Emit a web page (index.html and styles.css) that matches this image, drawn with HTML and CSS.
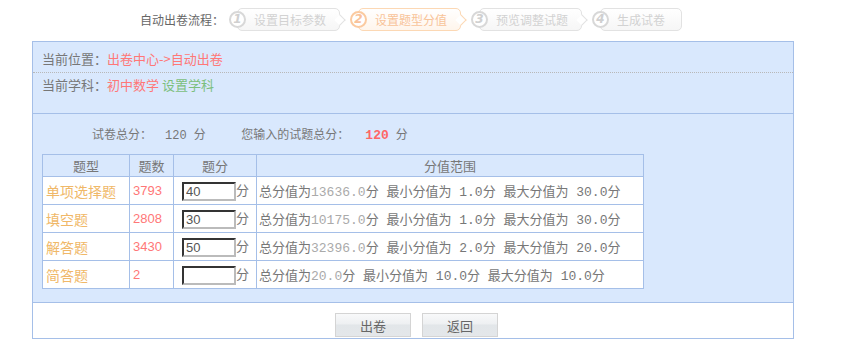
FILE: index.html
```html
<!DOCTYPE html>
<html>
<head>
<meta charset="utf-8">
<link rel="stylesheet" href="styles.css">
</head>
<body>
<div class="flow">
  <span class="flow-label">自动出卷流程：</span>
  <div class="step"><span class="num">1</span><span class="txt">设置目标参数</span><span class="arrow"></span></div>
  <div class="step active"><span class="num">2</span><span class="txt">设置题型分值</span><span class="arrow"></span></div>
  <div class="step"><span class="num">3</span><span class="txt">预览调整试题</span><span class="arrow"></span></div>
  <div class="step last"><span class="num">4</span><span class="txt">生成试卷</span></div>
</div>
<div class="box">
  <div class="info">
    <div class="line first">当前位置：<span class="red">出卷中心-&gt;自动出卷</span></div>
    <div class="line second">当前学科：<span class="red">初中数学</span> <span class="green">设置学科</span></div>
  </div>
  <div class="main">
    <div class="totals">
      <span>试卷总分：</span><span class="mono gap1">120</span><span class="sp">分</span>
      <span class="you">您输入的试题总分：</span><span class="big">120</span><span class="sp">分</span>
    </div>
    <table class="grid">
      <tr class="head"><th class="c1">题型</th><th class="c2">题数</th><th class="c3">题分</th><th class="c4">分值范围</th></tr>
      <tr><td class="type">单项选择题</td><td class="cnt">3793</td><td class="score"><input class="inp" value="40">分</td><td class="rng">总分值为<span class="lt">13636.0</span>分 最小分值为 1.0分 最大分值为 30.0分</td></tr>
      <tr><td class="type">填空题</td><td class="cnt">2808</td><td class="score"><input class="inp" value="30">分</td><td class="rng">总分值为<span class="lt">10175.0</span>分 最小分值为 1.0分 最大分值为 30.0分</td></tr>
      <tr><td class="type">解答题</td><td class="cnt">3430</td><td class="score"><input class="inp" value="50">分</td><td class="rng">总分值为<span class="lt">32396.0</span>分 最小分值为 2.0分 最大分值为 20.0分</td></tr>
      <tr><td class="type">简答题</td><td class="cnt">2</td><td class="score"><input class="inp" value="">分</td><td class="rng">总分值为<span class="lt">20.0</span>分 最小分值为 10.0分 最大分值为 10.0分</td></tr>
    </table>
  </div>
  <div class="actions">
    <button class="btn">出卷</button>
    <button class="btn">返回</button>
  </div>
</div>
</body>
</html>
```
FILE: styles.css
```css
* { box-sizing: border-box; }
body {
  margin: 0;
  background: #fff;
  font-family: "Noto Sans CJK SC", "Noto Sans", sans-serif;
  font-size: 12px;
  color: #666;
}
.flow {
  display: flex;
  align-items: center;
  height: 41px;
  padding-left: 140px;
  padding-bottom: 3px;
}
.flow-label { font-size: 12px; color: #666; margin-right: 5px; width: 84px; }
.step {
  position: relative;
  display: flex;
  align-items: center;
  height: 23px;
  border: 1px solid #e2e2e2;
  border-radius: 5px;
  padding: 0 13px 0 0;
  margin-left: 8px;
  margin-right: 10px;
  background: linear-gradient(#fff, #f6f6f6);
  color: #d2d2d2;
  font-size: 12px;
}
.step .num {
  display: inline-flex;
  align-items: center;
  justify-content: center;
  width: 17px;
  height: 17px;
  border: 2px solid #d8d8d8;
  border-radius: 50%;
  font-style: italic;
  font-weight: bold;
  font-size: 12px;
  color: #d0d0d0;
  background: #fff;
  margin-left: -9px;
  margin-right: 8px;
  font-family: "DejaVu Sans", sans-serif;
}
.step .arrow {
  position: absolute;
  right: -5px;
  top: 7px;
  width: 8px;
  height: 8px;
  background: #fff;
  border-top: 1px solid #e2e2e2;
  border-right: 1px solid #e2e2e2;
  transform: rotate(45deg);
}
.step.active { border-color: #fcd8b4; color: #f8c49a; background: linear-gradient(#fff, #fff5ec); }
.step.active .num { border-color: #fbcaa0; color: #f9c29a; }
.step.active .arrow { border-color: #fcd8b4; }
.step.last { padding-right: 16px; }

.box {
  margin-left: 32px;
  width: 762px;
  border: 1px solid #a5bfe8;
}
.info {
  background: #d9e8fd;
  height: 72px;
  border-bottom: 1px solid #a5bfe8;
}
.line { font-size: 13px; color: #777; padding-left: 9px; }
.line.first { height: 31px; line-height: 34px; border-bottom: 1px dotted #b8b8b8; }
.line.second { height: 24px; line-height: 24px; }
.red { color: #f77; }
.green { color: #7cbf7c; }
.main {
  background: #d9e8fd;
  padding: 8px 0 13px 9px;
  border-bottom: 1px solid #a5bfe8;
}
.totals {
  height: 24px;
  line-height: 24px;
  padding-left: 50px;
  margin-bottom: 8px;
  font-size: 12px;
  color: #777;
}
.mono { font-family: "Liberation Mono", monospace; }
.gap1 { margin-left: 13px; }
.sp { margin-left: 7px; }
.you { margin-left: 33px; }
.big { color: #f66; font-weight: bold; font-family: "Liberation Mono", monospace; margin-left: 16px; font-size: 13px; }
.grid {
  border-collapse: collapse;
  width: 602px;
}
.grid th, .grid td {
  border: 1px solid #a5bfe8;
  padding: 0;
}
.grid th {
  font-weight: normal;
  height: 22px;
  font-size: 13px;
  color: #777;
  background: #d9e8fd;
}
.c1 { width: 87px; }
.c2 { width: 44px; }
.c3 { width: 83px; }
.grid td { background: #fff; height: 28px; }
.type { color: #f0b868; font-size: 14px; padding-left: 3px !important; }
.cnt { color: #f77; font-family: "Liberation Sans", sans-serif; font-size: 13px; padding-left: 3px !important; }
.inp {
  width: 54px;
  height: 19px;
  border: 2px inset #888;
  border-right-color: #bbb;
  border-bottom-color: #bbb;
  margin: 0 0 0 8px;
  padding: 0 2px;
  font-family: "Liberation Sans", sans-serif;
  font-size: 13px;
  color: #555;
  vertical-align: middle;
}
.score { font-size: 13px; color: #777; }
.rng { font-size: 13px; color: #777; padding-left: 2px !important; font-family: "Liberation Mono", "Noto Sans CJK SC", monospace; }
.lt { color: #aaa; }
.actions {
  height: 35px;
  display: flex;
  justify-content: center;
  align-items: flex-end;
  gap: 11px;
  padding-left: 7px;
  padding-bottom: 1px;
}
.btn {
  width: 76px;
  height: 24px;
  border: 1px solid #d4d4d4;
  background: linear-gradient(#f8f9fa 0%, #eef0f2 45%, #e2e6e9 50%, #e4e7ea 100%);
  font-family: "Noto Sans CJK SC", sans-serif;
  font-size: 13px;
  color: #666;
  padding: 0;
}
```
